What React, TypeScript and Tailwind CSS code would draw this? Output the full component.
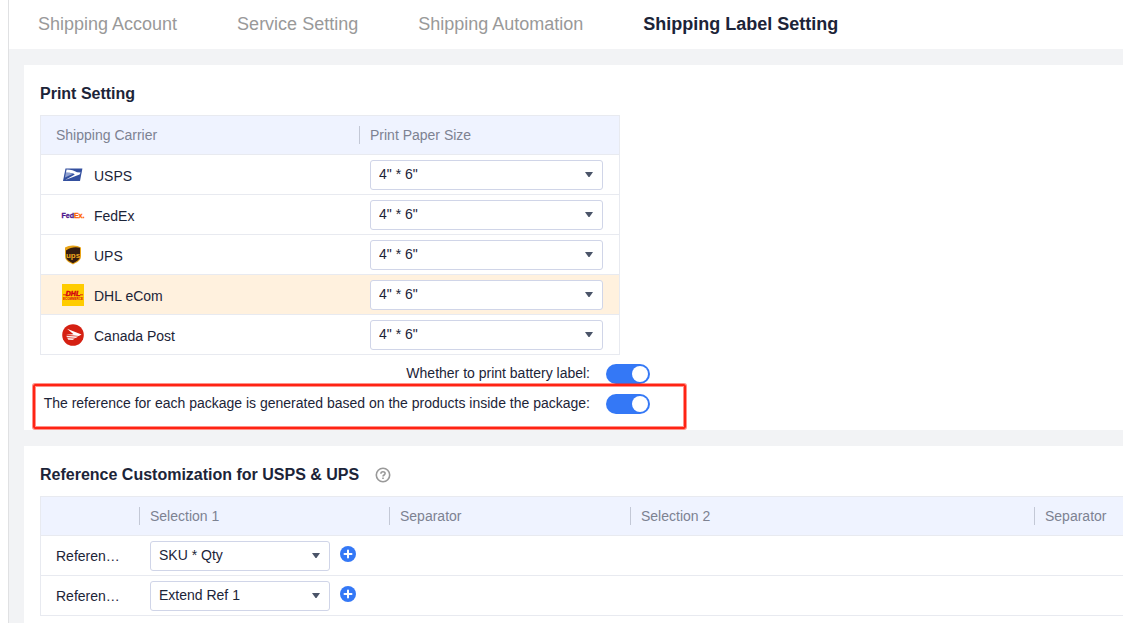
import { ReactNode, useState } from 'react'

const tabs = ['Shipping Account', 'Service Setting', 'Shipping Automation', 'Shipping Label Setting']

const paperSizes = ['4" * 6"', '8.5" * 11"']
const referenceOptions = ['SKU * Qty', 'Extend Ref 1', 'Extend Ref 2']

function UspsLogo() {
  return (
    <svg viewBox="0 0 22 22" className="size-[22px] shrink-0">
      <path d="M3.500 4.500H20.400L18 17H1Z" fill="#34509f" />
      <path d="M4.600 5.600C9 5.800 12.500 6.800 15 8.300L18.600 8.600L17.600 10.400L3.200 15.900L12.800 10.600C12 9.300 9.500 8.700 3.900 8.700Z" fill="#fff" />
      <path d="M3.900 8.500L11.600 9.600L3 13.500Z" fill="#8fa0cf" />
    </svg>
  )
}

function FedexLogo() {
  return (
    <svg viewBox="0 0 22 22" className="size-[22px] shrink-0 overflow-visible">
      <text x="-0.5" y="13.500" className="font-['Liberation_Sans',Arial,sans-serif] text-[7px] font-bold" strokeWidth=".3">
        <tspan fill="#4d148c" stroke="#4d148c">Fed</tspan>
        <tspan fill="#ff6200" stroke="#ff6200">Ex.</tspan>
      </text>
    </svg>
  )
}

function UpsLogo() {
  return (
    <svg viewBox="0 0 22 22" className="size-[22px] shrink-0">
      <path d="M3 3.500C7 .800 15 .800 19 3.500V12C19 16.500 15.500 18 11 20.500C6.500 18 3 16.500 3 12Z" fill="#e8a317" />
      <path d="M4 6.500C8.500 3 14 2.500 18 3.800V12C18 15.800 15 17 11 19.300C7 17 4 15.800 4 12Z" fill="#351c10" />
      <text x="11" y="13.500" textAnchor="middle" fill="#f0a91c" className="font-['Liberation_Sans',Arial,sans-serif] text-[8px] font-bold">ups</text>
    </svg>
  )
}

function DhlLogo() {
  return (
    <svg viewBox="0 0 22 22" className="size-[22px] shrink-0">
      <path d="M0 0H22V22H0Z" fill="#fc0" />
      <g fill="#d40511" textAnchor="middle" className="font-['Liberation_Sans',Arial,sans-serif] font-bold">
        <text x="11" y="12" stroke="#d40511" strokeWidth=".500" className="text-[7px] italic">DHL</text>
        <text x="11" y="15.500" className="text-[3px]">ECOMMERCE</text>
      </g>
      <path d="M1 10.800H4M18 10.800H21" stroke="#d40511" strokeWidth=".800" />
    </svg>
  )
}

function CanadaPostLogo() {
  return (
    <svg viewBox="0 0 22 22" className="size-[22px] shrink-0">
      <circle cx="11" cy="11" r="10.800" fill="#d52012" />
      <path d="M5 4.800L19.500 10.600L16.800 12L4 10.800L11.500 10.300Z" fill="#fff" />
      <path d="M4.400 11.800L16.300 12.600L13.800 14.100L4.900 13.300Z" fill="#fff" opacity=".900" />
      <path d="M5.300 14.100L13 14.600L10.600 16.100L6.200 15.700Z" fill="#fff" opacity=".900" />
    </svg>
  )
}

const carriers = [
  { name: 'USPS', logo: <UspsLogo /> },
  { name: 'FedEx', logo: <FedexLogo /> },
  { name: 'UPS', logo: <UpsLogo /> },
  { name: 'DHL eCom', logo: <DhlLogo />, active: true },
  { name: 'Canada Post', logo: <CanadaPostLogo /> },
]

const references = [
  { name: 'Reference 1', value: 'SKU * Qty' },
  { name: 'Reference 2', value: 'Extend Ref 1' },
]

function Select({ label, options, value, className }: { label: string; options: string[]; value: string; className: string }) {
  return (
    <div className={`relative h-[30px] ${className}`}>
      <select
        aria-label={label}
        defaultValue={value}
        className="block h-full w-full appearance-none rounded-[3px] border border-[#d0d5e8] bg-white pl-2 pr-7 pb-0.5 text-sm text-[#1c2438]"
      >
        {options.map((o) => <option key={o}>{o}</option>)}
      </select>
      <svg viewBox="0 0 8 5" className="pointer-events-none absolute right-2.5 top-3 h-[5px] w-2">
        <path d="M0 0H8L4.500 5H3.500Z" fill="#4a5468" />
      </svg>
    </div>
  )
}

function Switch({ id }: { id: string }) {
  const [on, setOn] = useState(true)
  return (
    <input
      id={id}
      type="checkbox"
      role="switch"
      checked={on}
      onChange={(e) => setOn(e.target.checked)}
      className="flex h-5 w-11 shrink-0 appearance-none items-center rounded-full bg-gray-300 px-0.5 before:size-4 before:rounded-full before:bg-white checked:justify-end checked:bg-[#3478f6]"
    />
  )
}

function HeadCell({ children, className = '' }: { children: ReactNode; className?: string }) {
  return (
    <th className={`h-[39px] border-b border-[#e8eaf0] bg-[#eff3ff] p-0 text-left font-normal text-[#7d8292] ${className}`}>
      <div className="h-[18px] border-l border-[#c3c8d6] pl-2.5 leading-[18px]">{children}</div>
    </th>
  )
}

export default function App() {
  return (
    <div className="flex min-h-screen overflow-hidden bg-white pl-2 font-['Liberation_Sans',Arial,sans-serif] text-sm text-[#1c2438]">
      <div className="flex min-w-0 flex-1 flex-col border-l border-[#e0e1e3] bg-[#f2f3f5]">
        <nav className="flex h-[49px] shrink-0 items-center gap-[60px] whitespace-nowrap bg-white px-[29px] pb-0.5 text-lg">
          {tabs.map((tab, i) => (
            <a key={tab} href="#" className={i === 3 ? 'font-bold' : 'text-[#999]'}>{tab}</a>
          ))}
        </nav>

        <main className="flex flex-1 flex-col gap-4 pl-[15px] pt-4">
          <section className="bg-white p-4">
            <h2 className="text-base font-bold leading-[26px]">Print Setting</h2>
            <table className="mt-2 w-[580px] table-fixed border-separate border-spacing-0 border-x border-t border-[#e8eaf0]">
              <thead>
                <tr>
                  <th className="w-[318px] border-b border-[#e8eaf0] bg-[#eff3ff] px-[15px] py-0 text-left font-normal text-[#7d8292]">Shipping Carrier</th>
                  <HeadCell>Print Paper Size</HeadCell>
                </tr>
              </thead>
              <tbody>
                {carriers.map((c) => (
                  <tr key={c.name} className={c.active ? 'bg-[#fff1de]' : ''}>
                    <td className="h-10 border-b border-[#e8eaf0] py-0 pl-[21px]">
                      <div className="flex items-center gap-2.5">
                        {c.logo}
                        <span className="pt-0.5">{c.name}</span>
                      </div>
                    </td>
                    <td className="border-b border-[#e8eaf0] pb-1 pl-[11px] pr-0 pt-[5px] align-top">
                      <Select label={c.name + ' paper size'} options={paperSizes} value={paperSizes[0]} className="w-[233px]" />
                    </td>
                  </tr>
                ))}
              </tbody>
            </table>

            <div className="mt-[9px] flex w-[610px] flex-col gap-2.5">
              <div className="flex justify-end gap-4">
                <label htmlFor="battery" className="leading-[18px]">Whether to print battery label:</label>
                <Switch id="battery" />
              </div>
              <div className="relative flex justify-end gap-4">
                <label htmlFor="reference" className="leading-[18px]">
                  The reference for each package is generated based on the products inside the package:
                </label>
                <Switch id="reference" />
                <div className="pointer-events-none absolute -bottom-[15px] -left-[7px] -right-9 -top-2.5 rounded-[2px] border-2 border-[#ff2314] shadow-[0_0_0_1px_#ff231480,inset_0_0_0_1px_#ff231480]" />
              </div>
            </div>
          </section>

          <section className="flex-1 bg-white pl-4 pt-4">
            <div className="flex items-center gap-4">
              <h2 className="text-base font-bold leading-[26px]">Reference Customization for USPS &amp; UPS</h2>
              <button aria-label="Help">
                <svg viewBox="0 0 16 16" className="size-4" fill="none" stroke="#999" strokeWidth="1.600">
                  <circle cx="8" cy="8" r="6.700" />
                  <path d="M5.900 6.700C5.900 4.100 10.100 4.100 10.100 6.500C10.100 8 8 8 8 9.600M8 10.500V12" />
                </svg>
              </button>
            </div>
            <table className="mt-2 w-full table-fixed border-separate border-spacing-0 border-l border-t border-[#e8eaf0]">
              <thead>
                <tr>
                  <th className="w-[98px] border-b border-[#e8eaf0] bg-[#eff3ff] p-0" />
                  <HeadCell className="w-[250px]">Selection 1</HeadCell>
                  <HeadCell className="w-[241px]">Separator</HeadCell>
                  <HeadCell className="w-[404px]">Selection 2</HeadCell>
                  <HeadCell>Separator</HeadCell>
                </tr>
              </thead>
              <tbody>
                {references.map((r) => (
                  <tr key={r.name}>
                    <td className="h-10 border-b border-[#e8eaf0] px-[15px] py-0">
                      <div className="truncate">{r.name}</div>
                    </td>
                    <td className="border-b border-[#e8eaf0] pb-1 pl-[11px] pr-0 pt-[5px] align-top">
                      <div className="flex items-center gap-2.5">
                        <Select label={r.name} options={referenceOptions} value={r.value} className="w-[180px]" />
                        <button aria-label={'Add to ' + r.name} className="pb-1">
                          <svg viewBox="0 0 16 16" className="size-4">
                            <circle cx="8" cy="8" r="8" fill="#3478f6" />
                            <path d="M8 4.500V11.500M4.500 8H11.500" stroke="#fff" strokeWidth="2" strokeLinecap="round" />
                          </svg>
                        </button>
                      </div>
                    </td>
                    <td className="border-b border-[#e8eaf0]" />
                    <td className="border-b border-[#e8eaf0]" />
                    <td className="border-b border-[#e8eaf0]" />
                  </tr>
                ))}
              </tbody>
            </table>
          </section>
        </main>
      </div>
    </div>
  )
}
